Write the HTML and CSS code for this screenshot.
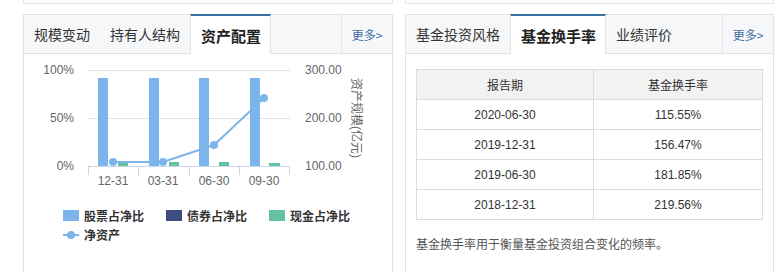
FILE: index.html
```html
<!DOCTYPE html>
<html lang="zh-CN">
<head>
<meta charset="UTF-8">
<meta name="viewport" content="width=device-width, initial-scale=1.0">
<title>基金资产配置</title>
<link rel="stylesheet" href="styles.css">
</head>
<body>
<div id="page">
  <div class="col col-left">
    <div class="prev"></div>
    <div class="panel">
      <div class="tabs">
        <div class="tab">规模变动</div>
        <div class="tab">持有人结构</div>
        <div class="tab active">资产配置</div>
        <div class="more">更多&gt;</div>
      </div>
      <div class="panel-body">
        <svg class="chart" width="368" height="140" viewBox="0 0 368 140">
          <!-- grid -->
          <line x1="64" y1="16.5" x2="266" y2="16.5" class="grid"/>
          <line x1="64" y1="64.5" x2="266" y2="64.5" class="grid"/>
          <line x1="64" y1="112.5" x2="266" y2="112.5" class="axis"/>
          <line x1="64.5" y1="112" x2="64.5" y2="121" class="axis"/>
          <line x1="114.5" y1="112" x2="114.5" y2="121" class="axis"/>
          <line x1="165.5" y1="112" x2="165.5" y2="121" class="axis"/>
          <line x1="215.5" y1="112" x2="215.5" y2="121" class="axis"/>
          <line x1="265.5" y1="112" x2="265.5" y2="121" class="axis"/>

          <!-- left axis -->
          <text x="50" y="20" text-anchor="end">100%</text>
          <text x="50" y="68" text-anchor="end">50%</text>
          <text x="50" y="116" text-anchor="end">0%</text>

          <!-- right axis -->
          <text x="281" y="20">300.00</text>
          <text x="281" y="68">200.00</text>
          <text x="281" y="116">100.00</text>
          <text transform="translate(328,64) rotate(90)" text-anchor="middle">资产规模(亿元)</text>

          <!-- stock bars -->
          <rect x="74" y="24" width="10" height="88" fill="#7cb5ec"/>
          <rect x="125" y="24" width="10" height="88" fill="#7cb5ec"/>
          <rect x="175" y="24" width="10" height="88" fill="#7cb5ec"/>
          <rect x="226" y="24" width="10" height="88" fill="#7cb5ec"/>

          <!-- cash bars -->
          <rect x="94" y="108" width="10" height="4" fill="#64c3a0"/>
          <rect x="145" y="108" width="10" height="4" fill="#64c3a0"/>
          <rect x="195" y="108" width="10" height="4" fill="#64c3a0"/>
          <rect x="245" y="109" width="11" height="3" fill="#64c3a0"/>

          <!-- net assets -->
          <polyline points="89,108 139,108 190,91 240,44" fill="none" stroke="#7cb5ec" stroke-width="2"/>
          <circle cx="89" cy="108" r="4" fill="#7cb5ec"/>
          <circle cx="139" cy="108" r="4" fill="#7cb5ec"/>
          <circle cx="190" cy="91" r="4" fill="#7cb5ec"/>
          <circle cx="240" cy="44" r="4" fill="#7cb5ec"/>

          <!-- categories -->
          <text x="89" y="131" text-anchor="middle">12-31</text>
          <text x="139" y="131" text-anchor="middle">03-31</text>
          <text x="190" y="131" text-anchor="middle">06-30</text>
          <text x="240" y="131" text-anchor="middle">09-30</text>
        </svg>
        <div class="legend">
          <div class="legend-item"><span class="swatch stock"></span>股票占净比</div>
          <div class="legend-item"><span class="swatch bond"></span>债券占净比</div>
          <div class="legend-item"><span class="swatch cash"></span>现金占净比</div>
          <div class="legend-item"><span class="line-mark"><i></i></span>净资产</div>
        </div>
      </div>
    </div>
  </div>

  <div class="col col-right">
    <div class="prev"></div>
    <div class="panel">
      <div class="tabs">
        <div class="tab">基金投资风格</div>
        <div class="tab active">基金换手率</div>
        <div class="tab">业绩评价</div>
        <div class="more">更多&gt;</div>
      </div>
      <div class="panel-body table-body">
        <table class="turnover">
          <tr><th class="c1">报告期</th><th>基金换手率</th></tr>
          <tr><td>2020-06-30</td><td>115.55%</td></tr>
          <tr><td>2019-12-31</td><td>156.47%</td></tr>
          <tr><td>2019-06-30</td><td>181.85%</td></tr>
          <tr><td>2018-12-31</td><td>219.56%</td></tr>
        </table>
        <p class="note">基金换手率用于衡量基金投资组合变化的频率。</p>
      </div>
    </div>
  </div>
</div>
</body>
</html>
```

FILE: styles.css
```css
body {
  margin: 0;
  font-family: "Liberation Sans", "Noto Sans CJK SC", sans-serif;
  color: #333;
  background-color: #fff;
}
#page {
  display: flex;
  gap: 12px;
  padding-left: 23px;
}
.col-left {
  width: 370px;
}
.col-right {
  width: 369px;
}
.prev {
  height: 3px;
  border: 1px solid #e4e4e4;
  border-top: none;
  margin-bottom: 10px;
}
.panel {
  border: 1px solid #e4e4e4;
  min-height: 280px;
}
/* Tabs */
.tabs {
  display: flex;
  height: 38px;
  background-color: #f6f7f9;
  border-bottom: 1px solid #e4e4e4;
}
.tab {
  display: flex;
  align-items: center;
  padding: 0 10px;
  font-size: 14px;
  font-family: "Noto Sans CJK SC", sans-serif;
  color: #333;
}
.tab.active {
  margin: -1px 0 -1px 0;
  padding: 0 9px 0 10px;
  background-color: #fff;
  border-top: 2px solid #3b72a6;
  border-left: 1px solid #e4e4e4;
  border-right: 1px solid #e4e4e4;
  font-size: 15px;
  font-weight: bold;
  color: #222;
}
.more {
  margin-left: auto;
  width: 50px;
  display: flex;
  align-items: center;
  justify-content: center;
  border-left: 1px solid #e4e4e4;
  font-size: 12px;
  font-family: "Noto Sans CJK SC", sans-serif;
  color: #3d6fa6;
}
/* Chart */
.chart {
  display: block;
}
.chart text {
  font-family: "Liberation Sans", "Noto Sans CJK SC", sans-serif;
  font-size: 12px;
  fill: #666;
}
.chart .grid {
  stroke: #e2e2e2;
  stroke-width: 1;
}
.chart .axis {
  stroke: #ccd6eb;
  stroke-width: 1;
}
.legend {
  display: grid;
  grid-template-columns: 103px 103px 103px;
  margin: 12px 0 0 39px;
  font-family: "Noto Sans CJK SC", sans-serif;
  font-size: 12px;
  font-weight: bold;
  line-height: 19px;
  color: #333;
}
.legend-item {
  display: flex;
  align-items: center;
}
.swatch {
  width: 16px;
  height: 11px;
  margin-right: 5px;
}
.stock { background-color: #7cb5ec; }
.bond { background-color: #3d4d80; }
.cash { background-color: #64c3a0; }
.line-mark {
  position: relative;
  width: 16px;
  height: 2px;
  margin-right: 5px;
  background-color: #7cb5ec;
}
.line-mark i {
  position: absolute;
  left: 4px;
  top: -3px;
  width: 8px;
  height: 8px;
  border-radius: 50%;
  background-color: #7cb5ec;
}
/* Table */
.table-body {
  padding: 15px 10px 0 10px;
}
.turnover {
  width: 100%;
  border-collapse: collapse;
  font-size: 12px;
}
.turnover th,
.turnover td {
  height: 29px;
  padding: 0;
  border: 1px solid #dcdcdc;
  text-align: center;
  font-weight: normal;
  color: #333;
}
.turnover th {
  background-color: #f2f2f2;
  font-family: "Noto Sans CJK SC", sans-serif;
}
.turnover .c1 {
  width: 176px;
}
.note {
  margin: 15px 0 0 0;
  font-size: 12px;
  line-height: 18px;
  color: #555;
  font-family: "Noto Sans CJK SC", sans-serif;
}
```
